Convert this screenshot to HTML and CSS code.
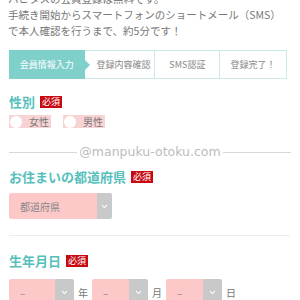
FILE: index.html
```html
<!DOCTYPE html>
<html lang="ja">
<head>
<meta charset="utf-8">
<link rel="stylesheet" href="styles.css">
</head>
<body>
<div class="page">
  <p class="intro">ハピタスの会員登録は無料です。<br>手続き開始からスマートフォンのショートメール（SMS）<br>で本人確認を行うまで、約5分です！</p>

  <div class="steps">
    <div class="step step-active">会員情報入力</div>
    <div class="step step-2">登録内容確認</div>
    <div class="step step-3">SMS認証</div>
    <div class="step step-4">登録完了！</div>
  </div>

  <div class="field field-gender">
    <h2 class="label">性別<span class="req">必須</span></h2>
    <div class="radios">
      <span class="radio"><span class="dot"></span>女性</span>
      <span class="radio"><span class="dot"></span>男性</span>
    </div>
  </div>

  <div class="watermark"><span class="wm-line"></span><span class="wm-text">@manpuku-otoku.com</span><span class="wm-line"></span></div>

  <div class="field field-pref">
    <h2 class="label">お住まいの都道府県<span class="req">必須</span></h2>
    <div class="select sel-pref"><span class="sel-text">都道府県</span><span class="sel-arrow"><svg width="7" height="5" viewBox="0 0 7 5"><path d="M1 1.2 L3.5 3.6 L6 1.2" fill="none" stroke="#fff" stroke-width="1.1"/></svg></span></div>
  </div>

  <div class="sep"></div>

  <div class="field field-birth">
    <h2 class="label">生年月日<span class="req">必須</span></h2>
    <div class="date-row">
      <div class="select sel-year"><span class="sel-text">–</span><span class="sel-arrow"><svg width="7" height="5" viewBox="0 0 7 5"><path d="M1 1.2 L3.5 3.6 L6 1.2" fill="none" stroke="#fff" stroke-width="1.1"/></svg></span></div>
      <span class="unit">年</span>
      <div class="select sel-md"><span class="sel-text">–</span><span class="sel-arrow"><svg width="7" height="5" viewBox="0 0 7 5"><path d="M1 1.2 L3.5 3.6 L6 1.2" fill="none" stroke="#fff" stroke-width="1.1"/></svg></span></div>
      <span class="unit">月</span>
      <div class="select sel-md"><span class="sel-text">–</span><span class="sel-arrow"><svg width="7" height="5" viewBox="0 0 7 5"><path d="M1 1.2 L3.5 3.6 L6 1.2" fill="none" stroke="#fff" stroke-width="1.1"/></svg></span></div>
      <span class="unit">日</span>
    </div>
  </div>
</div>
</body>
</html>
```

FILE: styles.css
```css
* { box-sizing: border-box; }
html, body { margin: 0; padding: 0; background: #fff; }
body {
  font-family: "Noto Sans CJK JP", "Noto Sans", sans-serif;
  color: #666;
  overflow: hidden;
}
.page {
  width: 300px;
  height: 300px;
  padding: 0 10px 0 9px;
  overflow: hidden;
}
.intro {
  margin: -9px 0 0 -1px;
  font-size: 10.5px;
  line-height: 16px;
  color: #777;
}
.steps {
  display: flex;
  margin-top: 11px;
  width: 278px;
  height: 29px;
  border: 1px solid #cde9e7;
  border-left: none;
}
.step {
  display: flex;
  align-items: center;
  justify-content: center;
  font-size: 9px;
  color: #888;
  border-left: 1px solid #cde9e7;
}
.step-active {
  position: relative;
  width: 76px;
  background: #7fcfcb;
  color: #fff;
  margin-top: -1px;
  margin-bottom: -1px;
  border-left: none;
}
.step-active::after {
  content: "";
  position: absolute;
  right: -5px;
  top: 50%;
  margin-top: -5px;
  border-left: 5px solid #7fcfcb;
  border-top: 5px solid transparent;
  border-bottom: 5px solid transparent;
}
.step-2 { width: 70px; border-left: none; padding-left: 8px; }
.step-3 { width: 65px; }
.step-4 { width: 67px; }

.field { margin: 0; }
.label {
  display: flex;
  align-items: center;
  margin: 0;
  font-size: 13px;
  line-height: 18px;
  font-weight: bold;
  color: #56bfbb;
}
.req {
  display: inline-block;
  margin-left: 5px;
  padding: 0 2px;
  background: #c8090f;
  color: #fff;
  font-size: 9px;
  line-height: 12px;
  font-weight: normal;
}
.field-gender { margin-top: 14px; }
.radios {
  display: flex;
  gap: 12px;
  margin-top: 4px;
}
.radio {
  display: flex;
  align-items: center;
  height: 13px;
  padding-right: 2px;
  background: #f8d3d3;
  font-size: 10px;
  color: #777;
}
.dot {
  width: 12px;
  height: 12px;
  margin: 0 7px 0 1px;
  border-radius: 50%;
  background: #fff;
}
.watermark {
  display: flex;
  align-items: center;
  margin-top: 16px;
  width: 282px;
}
.wm-line {
  flex: 1;
  height: 1px;
  background: #d8d8d8;
}
.wm-text {
  padding: 0 2px;
  font-family: "DejaVu Sans", sans-serif;
  font-size: 12.5px;
  line-height: 16px;
  color: #bcbcbc;
}
.field-pref { margin-top: 8px; }
.select {
  display: flex;
  height: 26px;
  font-size: 10px;
  color: #888;
}
.sel-pref { margin-top: 7px; width: 103px; }
.sel-text {
  flex: 1;
  display: flex;
  align-items: center;
  padding-left: 11px;
  background: #fcc8c8;
  border-radius: 2px 0 0 2px;
}
.sel-arrow {
  display: flex;
  align-items: center;
  justify-content: center;
  width: 15px;
  background: #c9c9c9;
  border-radius: 0 2px 2px 0;
}
.sep {
  margin-top: 16px;
  width: 281px;
  height: 1px;
  background: #ececec;
}
.field-birth { margin-top: 16px; }
.date-row {
  display: flex;
  align-items: center;
  margin-top: 9px;
}
.sel-year { width: 65px; }
.sel-md { width: 56px; }
.sel-year .sel-arrow, .sel-md .sel-arrow { width: 19px; }
.unit {
  font-size: 10px;
  color: #777;
  padding: 0 4px 0 4px;
}
```
